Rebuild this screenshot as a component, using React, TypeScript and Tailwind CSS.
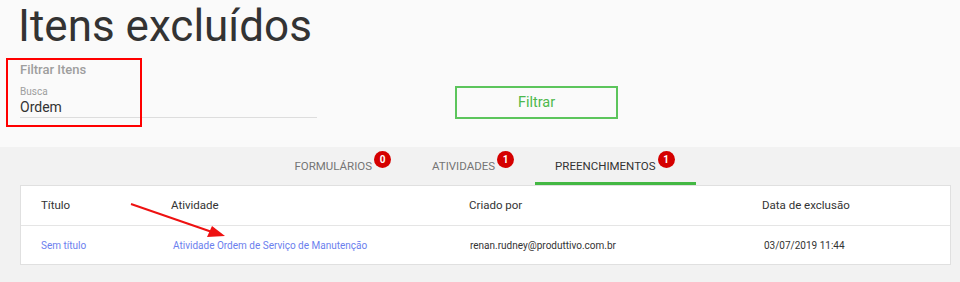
export default function App() {
  const tabs = [
    { label: 'FORMULÁRIOS', count: 0, active: false },
    { label: 'ATIVIDADES', count: 1, active: false },
    { label: 'PREENCHIMENTOS', count: 1, active: true },
  ];

  return (
    <div className="relative w-[960px] h-[282px] overflow-hidden bg-[#f2f2f2] font-['Roboto',sans-serif]">
      {/* topo */}
      <div className="h-[147px] bg-[#fafafa]">
        <h1 className="pl-[18px] text-[44px] leading-[52px] text-[#333]">Itens excluídos</h1>
        <div className="flex mt-2 pl-5">
          <div className="w-[297px]">
            <div className="text-[13px] leading-5 font-medium text-[#9e9e9e]">Filtrar Itens</div>
            <div className="mt-[5px] text-[10px] leading-[13px] text-[#9e9e9e]">Busca</div>
            <div className="pb-[1px] border-b border-[#dddddd] text-[14px] leading-[18px] text-[#333]">Ordem</div>
          </div>
          <button className="ml-[138px] mt-[26px] w-[163px] h-[33px] border-2 border-[#5cc55c] text-[14.5px] text-[#4cb84c]">
            Filtrar
          </button>
        </div>
      </div>

      {/* abas */}
      <div className="flex justify-center h-[38px] pl-5 pr-[10px]">
        {tabs.map((t) => (
          <div
            key={t.label}
            className={
              'flex items-center pl-5 pr-[21px] border-b-[3px] ' +
              (t.active ? 'border-[#43b843] text-[#333]' : 'border-transparent text-[#757575]')
            }
          >
            <span className="text-[11.5px] leading-[15px] pt-[3px]">{t.label}</span>
            <span className="ml-[2px] -translate-y-[5px] flex items-center justify-center w-[17px] h-[17px] rounded-full bg-[#d50000] text-white text-[10px] font-bold">
              {t.count}
            </span>
          </div>
        ))}
      </div>

      {/* tabela */}
      <div className="ml-5 w-[931px] bg-white border border-[#e0e0e0]">
        <div className="grid grid-cols-[130px_298px_293px_1fr] items-center h-[40px] px-5 border-b border-[#e5e5e5] text-[11.5px] text-[#333]">
          <div>Título</div>
          <div>Atividade</div>
          <div>Criado por</div>
          <div>Data de exclusão</div>
        </div>
        <div className="grid grid-cols-[130px_298px_293px_1fr] items-center h-[38px] px-5 text-[10px] text-[#333]">
          <div className="text-[#6b80ee]">Sem título</div>
          <div className="pl-[2px] text-[#6b80ee]">Atividade Ordem de Serviço de Manutenção</div>
          <div className="pl-[1px]">renan.rudney@produttivo.com.br</div>
          <div className="pl-[2px]">03/07/2019 11:44</div>
        </div>
      </div>

      {/* anotações */}
      <div className="absolute left-[6px] top-[58px] w-[136px] h-[69px] border-2 border-[#ff0000]" />
      <svg className="absolute left-0 top-0" width="960" height="282">
        <line x1="131" y1="204" x2="212" y2="232" stroke="#ee1111" strokeWidth="2" />
        <polygon points="225,236 207,237 212,226" fill="#ee1111" />
      </svg>
    </div>
  );
}
